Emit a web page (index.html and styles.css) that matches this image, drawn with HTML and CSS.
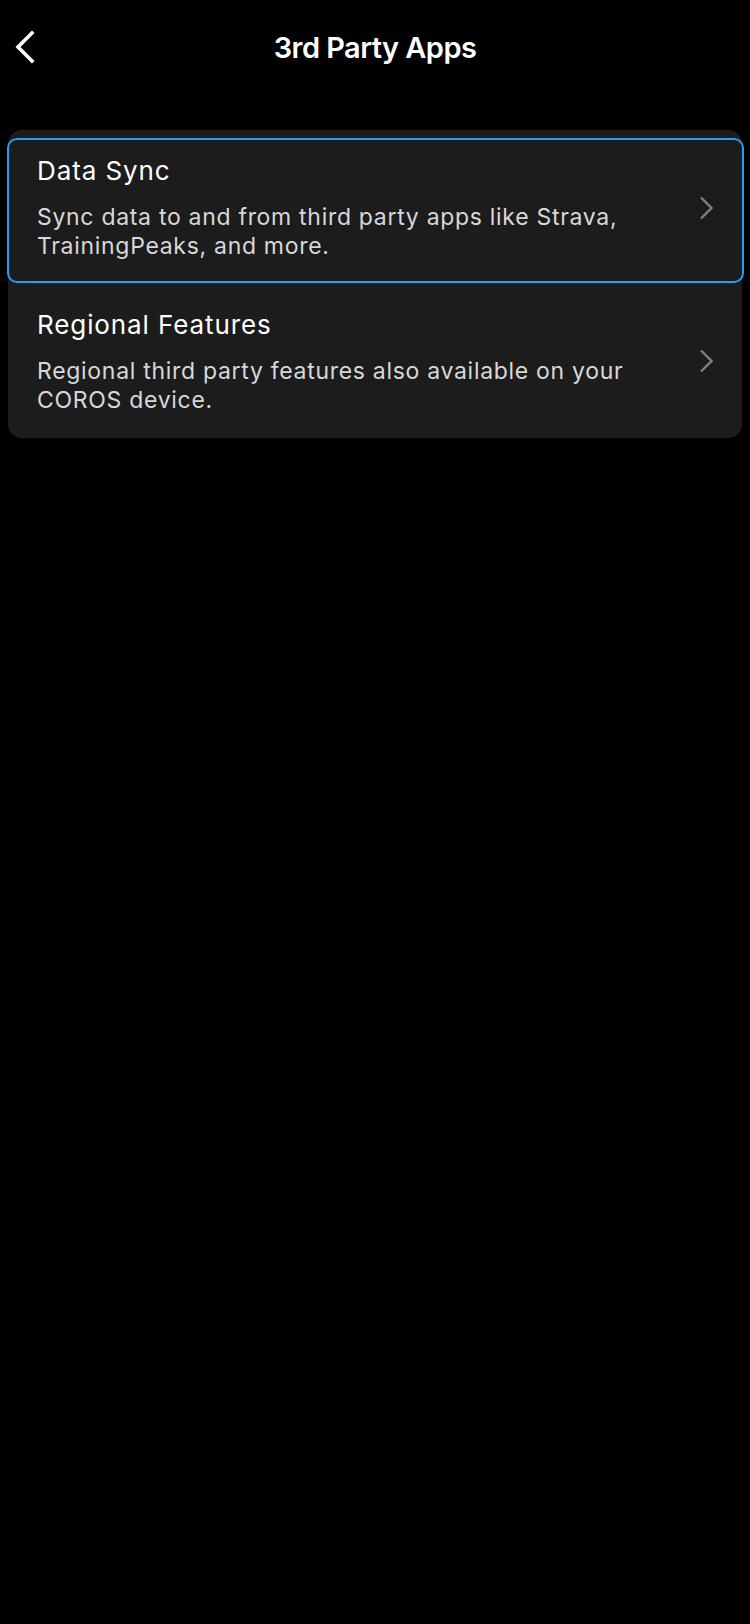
FILE: index.html
```html
<!DOCTYPE html>
<html lang="en">
<head>
<meta charset="utf-8">
<title>3rd Party Apps</title>
<link rel="stylesheet" href="styles.css">
</head>
<body>
<header class="nav">
  <div class="nav-left">
    <svg class="back-icon" width="22" height="34" viewBox="0 0 22 34" aria-hidden="true">
      <polyline points="18,3 4,17 18,31" fill="none" stroke="#ffffff" stroke-width="3.6" stroke-linecap="square" stroke-linejoin="miter"/>
    </svg>
  </div>
  <h1 class="nav-title">3rd Party Apps</h1>
  <div class="nav-right"></div>
</header>

<main class="card">
  <div class="row row-active">
    <div class="row-text">
      <div class="row-title">Data Sync</div>
      <div class="row-desc">Sync data to and from third party apps like Strava, TrainingPeaks, and more.</div>
    </div>
    <svg class="chevron" width="14" height="24" viewBox="0 0 14 24" aria-hidden="true">
      <polyline points="2,1.5 12.5,12 2,22.5" fill="none" stroke="#808080" stroke-width="2.3"/>
    </svg>
  </div>
  <div class="row row-plain">
    <div class="row-text">
      <div class="row-title">Regional Features</div>
      <div class="row-desc">Regional third party features also available on your COROS device.</div>
    </div>
    <svg class="chevron" width="14" height="24" viewBox="0 0 14 24" aria-hidden="true">
      <polyline points="2,1.5 12.5,12 2,22.5" fill="none" stroke="#808080" stroke-width="2.3"/>
    </svg>
  </div>
</main>
</body>
</html>
```

FILE: styles.css
```css
* {
  box-sizing: border-box;
}

html, body {
  margin: 0;
  padding: 0;
  background: #000000;
}

body {
  width: 750px;
  min-height: 1624px;
  font-family: Inter, "Noto Sans", "Liberation Sans", sans-serif;
  color: #ffffff;
}

.nav {
  display: grid;
  grid-template-columns: 1fr auto 1fr;
  align-items: start;
  padding-top: 30px;
  height: 130px;
}

.nav-left {
  padding-left: 14px;
}

.back-icon {
  display: block;
}

.nav-title {
  margin: 0;
  font-size: 29px;
  line-height: 36px;
  font-weight: 600;
  letter-spacing: -0.55px;
  color: #ffffff;
}

.card {
  margin: 0 8px;
  width: 734px;
  background: #1c1c1c;
  border-radius: 14px;
  padding-top: 8px;
}

.row {
  display: flex;
  align-items: flex-start;
}

.row-active {
  margin: 0 -2px 0 -1px;
  border: 2.5px solid #249ef6;
  border-radius: 10px;
  height: 145px;
  padding: 15px 29px 0 28px;
}

.row-active .chevron {
  margin-top: 41px;
}

.row-plain {
  height: 155px;
  padding: 26px 29px 0 29px;
}

.row-plain .chevron {
  margin-top: 40px;
}

.row-text {
  flex: 1;
  min-width: 0;
  padding-right: 50px;
}

.row-title {
  font-size: 26px;
  line-height: 32px;
  font-weight: 400;
  color: #ffffff;
  letter-spacing: 0.9px;
}

.row-desc {
  margin-top: 16px;
  font-size: 23px;
  line-height: 29px;
  color: #d8d8d8;
  letter-spacing: 0.7px;
}

.chevron {
  display: block;
  flex: none;
}
```
